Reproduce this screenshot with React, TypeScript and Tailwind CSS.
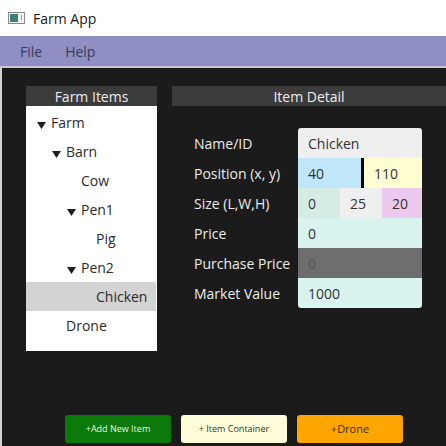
import type { ReactNode } from 'react';

type Node = { label: string; level: number; open?: boolean; selected?: boolean };

const tree: Node[] = [
  { label: 'Farm', level: 0, open: true },
  { label: 'Barn', level: 1, open: true },
  { label: 'Cow', level: 2 },
  { label: 'Pen1', level: 2, open: true },
  { label: 'Pig', level: 3 },
  { label: 'Pen2', level: 2, open: true },
  { label: 'Chicken', level: 3, selected: true },
  { label: 'Drone', level: 1 },
];

const indent = ['pl-[25px]', 'pl-[40px]', 'pl-[55px]', 'pl-[70px]'];

function Caret() {
  return (
    <svg width="9" height="7" viewBox="0 0 9 7" className="absolute -left-[14px] top-[10px]">
      <polygon points="0,0 9,0 4.5,7" fill="#1e1e1e" />
    </svg>
  );
}

function Row({ label, children }: { label: string; children: ReactNode }) {
  return (
    <div className="flex h-[30px] items-center">
      <div className="w-[104px] text-[14px] text-[#ececec]">{label}</div>
      <div className="flex h-full w-[124px]">{children}</div>
    </div>
  );
}

function Field({ value, className }: { value: string; className: string }) {
  return <div className={`flex h-full items-center pl-[10px] text-[14px] ${className}`}>{value}</div>;
}

export default function App() {
  return (
    <div
      className="flex h-[446px] w-[446px] flex-col overflow-hidden bg-white"
      style={{ fontFamily: '"Open Sans", "Noto Sans", sans-serif' }}
    >
      <div className="flex h-[36px] shrink-0 items-center gap-[8px] pl-[8px]">
        <div className="flex h-[12px] w-[17px] border border-[#8a8a8a] bg-[#f3f3f3]">
          <div className="m-[1px] w-[8px] bg-[#3f7f7a]" />
          <div className="ml-auto mr-[2px] mt-[2px] h-[5px] w-[1px] bg-[#9a9a9a]" />
        </div>
        <span className="text-[14px] text-[#1a1a1a]">Farm App</span>
      </div>
      <div className="flex h-[30px] shrink-0 items-center gap-[23px] bg-[#8f8fc3] pl-[20px] text-[14px] text-[#3b3b5c]">
        <span>File</span>
        <span>Help</span>
      </div>
      <div className="h-[2px] shrink-0 bg-[#c6c6d6]" />
      <div className="flex flex-1 flex-col border-l-2 border-[#d2d2d2] bg-[#1b1b1b]">
        <div className="flex gap-[15px] pl-[24px] pt-[18px]">
          <div className="w-[131px]">
            <div className="flex h-[20px] items-center justify-center bg-[#3c3c3c] text-[14px] text-[#ededed]">
              Farm Items
            </div>
            <div className="h-[245px] bg-white pt-[2px]">
              {tree.map((n) => (
                <div
                  key={n.label}
                  className={`flex h-[29px] items-center text-[14px] text-[#2b2b2b] ${indent[n.level]} ${
                    n.selected ? 'mr-[1px] bg-[#d3d3d3]' : ''
                  }`}
                >
                  <span className="relative">
                    {n.open && <Caret />}
                    {n.label}
                  </span>
                </div>
              ))}
            </div>
          </div>
          <div className="flex-1">
            <div className="flex h-[20px] items-center justify-center bg-[#3c3c3c] text-[14px] text-[#ededed]">
              Item Detail
            </div>
            <div className="pl-[22px] pt-[22px]">
              <Row label="Name/ID">
                <Field value="Chicken" className="w-full rounded-t-[3px] bg-[#efefef] text-[#333]" />
              </Row>
              <Row label="Position (x, y)">
                <Field value="40" className="w-[63px] bg-[#bfe6f9] text-[#333]" />
                <div className="w-[3px] bg-black" />
                <Field value="110" className="flex-1 bg-[#fffdd2] text-[#333]" />
              </Row>
              <Row label="Size (L,W,H)">
                <Field value="0" className="w-[42px] bg-[#d5ece5] text-[#333]" />
                <Field value="25" className="w-[42px] bg-[#efefef] text-[#333]" />
                <Field value="20" className="flex-1 bg-[#ebcaee] text-[#333]" />
              </Row>
              <Row label="Price">
                <Field value="0" className="w-full bg-[#d9f3ee] text-[#333]" />
              </Row>
              <Row label="Purchase Price">
                <Field value="0" className="w-full bg-[#6e6e6e] text-[#575757]" />
              </Row>
              <Row label="Market Value">
                <Field value="1000" className="w-full rounded-b-[3px] bg-[#d9f3ee] text-[#333]" />
              </Row>
            </div>
          </div>
        </div>
        <div className="mt-auto mb-[3px] flex gap-[10px] pl-[63px]">
          <button className="flex h-[28px] w-[106px] items-center justify-center rounded-[3px] bg-[#0b7a0b] text-[9px] text-[#e6f5e0]">
            +Add New Item
          </button>
          <button className="flex h-[28px] w-[106px] items-center justify-center rounded-[3px] bg-[#fffdd9] text-[9px] text-[#333]">
            + Item Container
          </button>
          <button className="flex h-[28px] w-[106px] items-center justify-center rounded-[3px] bg-[#ffa500] text-[11px] text-[#3a2a00]">
            +Drone
          </button>
        </div>
      </div>
    </div>
  );
}
